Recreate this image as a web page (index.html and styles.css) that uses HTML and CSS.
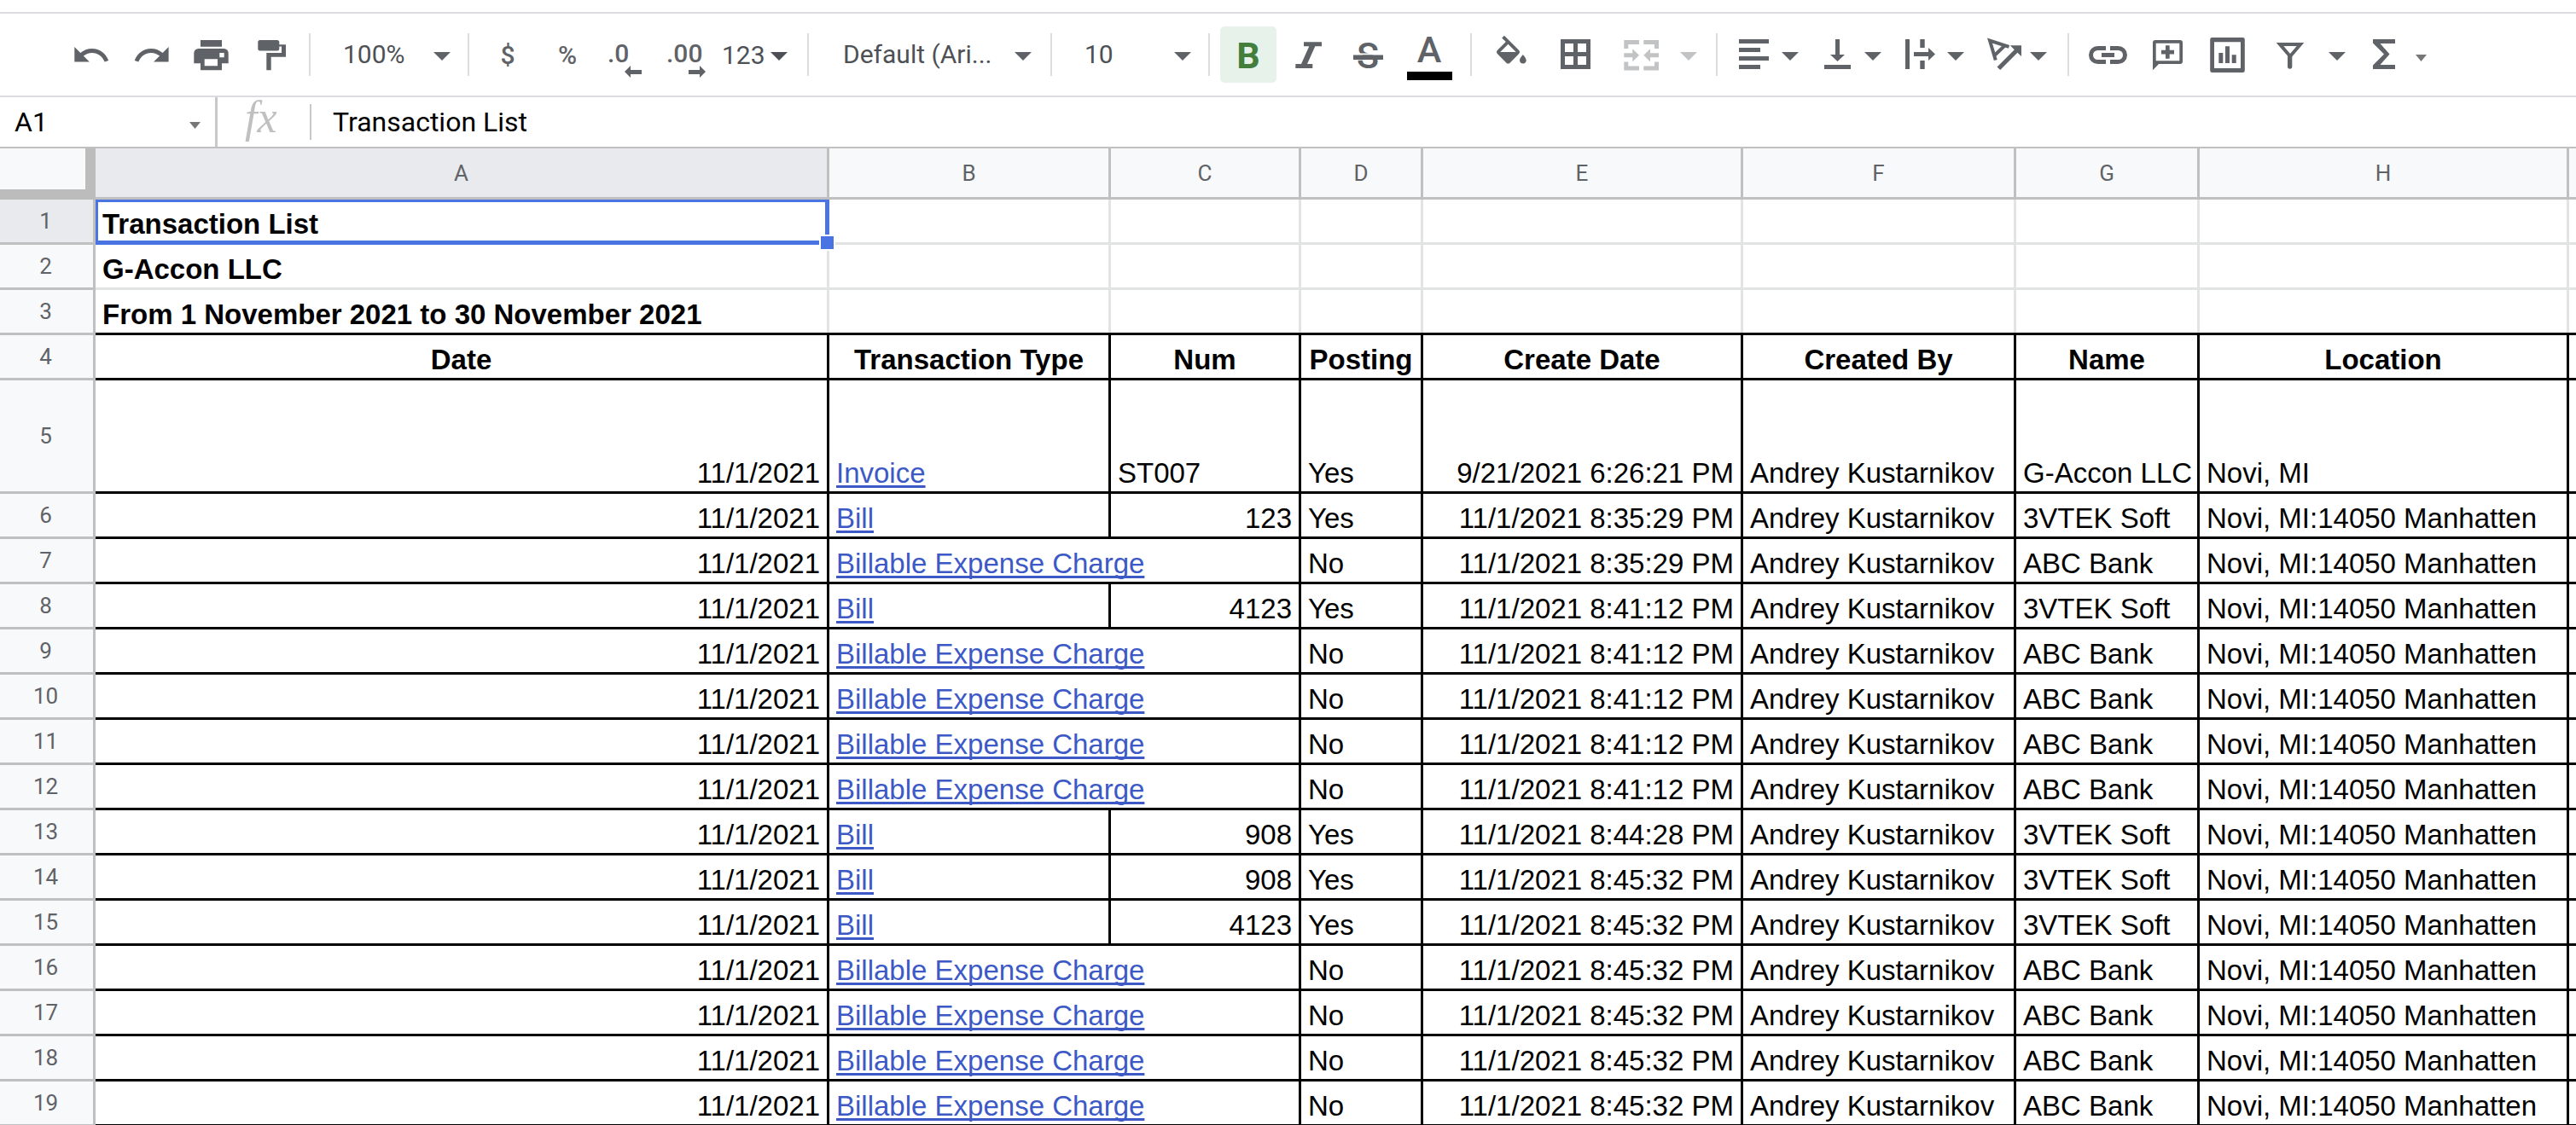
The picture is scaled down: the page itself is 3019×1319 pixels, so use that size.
FILE: index.html
```html
<!DOCTYPE html>
<html lang="en">
<head>
<meta charset="utf-8">
<title>Transaction List</title>
<link rel="stylesheet" href="styles.css">
</head>
<body>
<div class="app">
<header class="toolbar" role="toolbar" aria-label="Formatting">
  <div class="group">
    <button class="tool" aria-label="Undo"><svg class="icon" viewBox="0 0 44 44"><path transform="translate(-1.6 -.6) scale(1.95)" d="M12.5 8c-2.65 0-5.05.99-6.9 2.6L2 7v9h9l-3.62-3.62c1.39-1.16 3.16-1.88 5.12-1.88 3.54 0 6.55 2.31 7.6 5.5l2.37-.78C21.08 11.03 17.15 8 12.5 8z"/></svg></button>
    <button class="tool" aria-label="Redo"><svg class="icon" viewBox="0 0 44 44"><path transform="translate(-.3 -.6) scale(1.95)" d="M18.4 10.6C16.55 8.99 14.15 8 11.5 8c-4.65 0-8.58 3.03-9.96 7.22L3.9 16c1.05-3.19 4.05-5.5 7.6-5.5 1.95 0 3.73.72 5.12 1.88L13 16h9V7l-3.6 3.6z"/></svg></button>
    <button class="tool" aria-label="Print"><svg class="icon" viewBox="0 0 44 44"><path fill-rule="evenodd" d="M10 5h25v7.7H10zM7.5 15h30a5.2 5.2 0 0 1 5.2 5.2v12.1H35v8H10v-8H2.3V20.2A5.2 5.2 0 0 1 7.500 15zM14.700 27.300v8H30v-8zM32.300 20v5.300h5.400V20z"/></svg></button>
    <button class="tool" aria-label="Paint format"><svg class="icon" viewBox="0 0 44 44"><rect x="7.300" y="5" width="25" height="12.400" rx="2.500"/><path d="M32 10.300H40V24.700H22.700V40.300H17.300V20H35V12.500H32z"/></svg></button>
  </div>
  <span class="sep"></span>
  <div class="dropdown dropdown--zoom">
    <select aria-label="Zoom"><option>100%</option></select>
    <svg class="caret" viewBox="0 0 20 14"><path d="M0 4h20L10 14z"/></svg>
  </div>
  <span class="sep"></span>
  <div class="group">
    <button class="tool" aria-label="Format as currency">$</button>
    <button class="tool" aria-label="Format as percent">%</button>
    <button class="tool" aria-label="Decrease decimal places"><svg class="icon" viewBox="0 0 44 44"><text class="digits" x="-1" y="31">.0</text><path d="M19 42l7-7v5h13v5H26v4z"/></svg></button>
    <button class="tool" aria-label="Increase decimal places"><svg class="icon" viewBox="0 0 44 44"><text class="digits" x="-2" y="31">.00</text><path d="M44 42l-7-7v5H24v5h13v4z"/></svg></button>
    <button class="tool tool--number" aria-label="More formats">123<svg class="caret" viewBox="0 0 20 14"><path d="M0 4h20L10 14z"/></svg></button>
  </div>
  <span class="sep"></span>
  <div class="dropdown dropdown--font">
    <select aria-label="Font"><option>Default (Ari...</option></select>
    <svg class="caret" viewBox="0 0 20 14"><path d="M0 4h20L10 14z"/></svg>
  </div>
  <span class="sep"></span>
  <div class="dropdown dropdown--size">
    <select aria-label="Font size"><option>10</option></select>
    <svg class="caret" viewBox="0 0 20 14"><path d="M0 4h20L10 14z"/></svg>
  </div>
  <span class="sep"></span>
  <div class="group">
    <button class="tool tool--on" aria-label="Bold" aria-pressed="true"><svg class="icon" viewBox="0 0 44 44"><text class="letter letter--bold" x="22" y="38">B</text></svg></button>
    <button class="tool" aria-label="Italic"><svg class="icon" viewBox="0 0 44 44"><path d="M17 7.300H38v5H30.300L21 33h6.300v5H7.300v-5H14L23.300 12.300H17z"/></svg></button>
    <button class="tool" aria-label="Strikethrough"><svg class="icon" viewBox="0 0 44 44"><text class="letter" x="22" y="38">S</text><path class="knockout" d="M5 20.500h35v2H5z"/><path d="M5 22.500h35v5.500H5z"/></svg></button>
    <button class="tool tool--wide" aria-label="Text color"><svg class="icon" viewBox="0 0 44 44"><text class="letter" x="22" y="31">A</text><path class="swatch" d="M-4 42h53v10H-4z"/></svg></button>
  </div>
  <span class="sep"></span>
  <div class="group">
    <button class="tool tool--wide" aria-label="Fill color"><svg class="icon" viewBox="0 0 44 44"><path transform="translate(-1.8 -.3) scale(1.93)" d="M16.560 8.940L7.620 0 6.210 1.410l2.380 2.380-5.150 5.150c-.59.59-.59 1.540 0 2.120l5.500 5.500c.29.29.68.44 1.060.44s.77-.15 1.060-.44l5.500-5.500c.59-.58.59-1.530 0-2.120zM5.210 10L10 5.210 14.790 10H5.210zM19 11.500s-2 2.170-2 3.500c0 1.100.9 2 2 2s2-.9 2-2c0-1.330-2-3.500-2-3.500z"/></svg></button>
    <button class="tool tool--wide" aria-label="Borders"><svg class="icon" viewBox="0 0 44 44"><path fill-rule="evenodd" d="M4 4h35v35H4zM9 9v10h10V9zM24 9v10h10V9zM9 24v10h10V24zM24 24v10h10V24z"/></svg></button>
    <button class="tool tool--menu-wide" aria-label="Merge cells" disabled><svg class="icon" viewBox="0 0 44 44"><path d="M2.300 5H20v5H7.300v5h-5zM25.300 5H43v10h-5v-5H25.300zM2.300 30.500h5v5H20v5H2.300zM38 30.500h5v10H25.300v-5H38zM2.300 20.300h10v-5l7.700 7.500-7.700 7.500v-5h-10zM43 20.300H33v-5l-7.700 7.500 7.700 7.500v-5h10z"/></svg><svg class="caret" viewBox="0 0 20 14"><path d="M0 4h20L10 14z"/></svg></button>
  </div>
  <span class="sep"></span>
  <div class="group group--align">
    <button class="tool tool--menu" aria-label="Horizontal align"><svg class="icon" viewBox="0 0 44 44"><path d="M5 4h35v5H5zM5 14h25v5H5zM5 24h35v5H5zM5 34h25v5H5z"/></svg><svg class="caret" viewBox="0 0 20 14"><path d="M0 4h20L10 14z"/></svg></button>
    <button class="tool tool--menu" aria-label="Vertical align"><svg class="icon" viewBox="0 0 44 44"><path d="M8 34h31v5H8zM21 4h5v18h6l-8.500 8L15 22h6z"/></svg><svg class="caret" viewBox="0 0 20 14"><path d="M0 4h20L10 14z"/></svg></button>
    <button class="tool tool--menu" aria-label="Text wrapping"><svg class="icon" viewBox="0 0 44 44"><path d="M6 4h5v35H6zM23.300 4h5.400v10h-5.400zM23.300 29h5.400v10h-5.400zM16 19h17v-5l8 7.500-8 7.500v-5H16z"/></svg><svg class="caret" viewBox="0 0 20 14"><path d="M0 4h20L10 14z"/></svg></button>
    <button class="tool tool--menu" aria-label="Text rotation"><svg class="icon" viewBox="0 0 44 44"><path class="line line--4" d="M14.800 28.500L8 5.500l22.500 7.300M13.500 23L25 12"/><path d="M16.500 36.500l20.300-20.300-5-4.900H45V24l-4.600-4.300-20.200 20.300z"/></svg><svg class="caret" viewBox="0 0 20 14"><path d="M0 4h20L10 14z"/></svg></button>
  </div>
  <span class="sep"></span>
  <div class="group">
    <button class="tool" aria-label="Insert link"><svg class="icon" viewBox="0 0 44 44"><path class="line line--5" d="M20 14.500h-9.500a8 8 0 0 0 0 16H20M25 14.500h9.500a8 8 0 0 1 0 16H25"/><path d="M15 20h15v5H15z"/></svg></button>
    <button class="tool" aria-label="Insert comment"><svg class="icon" viewBox="0 0 44 44"><path fill-rule="evenodd" d="M8 5h29a3 3 0 0 1 3 3v22a3 3 0 0 1-3 3H12l-7 7.300V8a3 3 0 0 1 3-3zM8.700 8.700v20.600h27.600V8.700zM15 16.700h5v-5.400h4.700v5.400H30v4.800h-5.300v5.200H20v-5.200h-5z"/></svg></button>
    <button class="tool" aria-label="Insert chart"><svg class="icon" viewBox="0 0 44 44"><path fill-rule="evenodd" d="M4.500 2h36A2.300 2.300 0 0 1 42.800 4.300v36.400a2.300 2.300 0 0 1-2.300 2.300h-36A2.300 2.300 0 0 1 2.200 40.700V4.300A2.300 2.300 0 0 1 4.500 2zM7 7.200V38h31V7.200zM12.300 20h5v12h-5zM20 12.300h5V32h-5zM27.700 22.300h5V32h-5z"/></svg></button>
    <button class="tool tool--menu-wide" aria-label="Filter"><svg class="icon" viewBox="0 0 44 44"><path class="line line--4" d="M11 10h24L23 24z"/><path d="M20 23h5.300v13a2.600 2.600 0 0 1-5.300 0z"/></svg><svg class="caret" viewBox="0 0 20 14"><path d="M0 4h20L10 14z"/></svg></button>
    <button class="tool tool--sum" aria-label="Functions"><svg class="icon" viewBox="0 0 44 44"><path d="M9 4h26v5H17.500l11 12.500L17.500 34H35v5H9v-4.500l13-13L9 8.500z"/></svg><svg class="caret caret--small" viewBox="0 0 13 16"><path d="M0 8h13L6.500 16z"/></svg></button>
  </div>
</header>

<div class="formula-bar">
  <div class="name-box">
    <input class="name-input" type="text" aria-label="Name box" value="A1">
    <button class="name-menu" aria-label="Named ranges"><svg class="caret caret--small" viewBox="0 0 13 16"><path d="M0 8h13L6.500 16z"/></svg></button>
  </div>
  <label class="fx" for="formula">fx</label>
  <input class="formula-input" id="formula" type="text" value="Transaction List">
</div>

<main class="sheet">
<table class="grid">
  <colgroup>
    <col class="col-head"><col class="col-a"><col class="col-b"><col class="col-c"><col class="col-d"><col class="col-e"><col class="col-f"><col class="col-g"><col class="col-h"><col>
  </colgroup>
  <thead>
    <tr><td class="corner"></td><th class="active">A</th><th>B</th><th>C</th><th>D</th><th>E</th><th>F</th><th>G</th><th>H</th><th></th></tr>
  </thead>
  <tbody class="intro">
    <tr><th class="active">1</th><td class="selected">Transaction List<span class="selection"></span><span class="handle"></span></td><td></td><td></td><td></td><td></td><td></td><td></td><td></td><td></td></tr>
    <tr><th>2</th><td>G-Accon LLC</td><td></td><td></td><td></td><td></td><td></td><td></td><td></td><td></td></tr>
    <tr class="last"><th>3</th><td>From 1 November 2021 to 30 November 2021</td><td></td><td></td><td></td><td></td><td></td><td></td><td></td><td></td></tr>
  </tbody>
  <tbody class="data">
    <tr class="titles"><th>4</th><td>Date</td><td>Transaction Type</td><td>Num</td><td>Posting</td><td>Create Date</td><td>Created By</td><td>Name</td><td>Location</td><td></td></tr>
    <tr class="tall"><th>5</th><td class="num">11/1/2021</td><td><a href="#">Invoice</a></td><td>ST007</td><td>Yes</td><td class="num">9/21/2021 6:26:21 PM</td><td>Andrey Kustarnikov</td><td>G-Accon LLC</td><td>Novi, MI</td><td></td></tr>
    <tr><th>6</th><td class="num">11/1/2021</td><td><a href="#">Bill</a></td><td class="num">123</td><td>Yes</td><td class="num">11/1/2021 8:35:29 PM</td><td>Andrey Kustarnikov</td><td>3VTEK Soft</td><td>Novi, MI:14050 Manhatten</td><td></td></tr>
    <tr><th>7</th><td class="num">11/1/2021</td><td colspan="2"><a href="#">Billable Expense Charge</a></td><td>No</td><td class="num">11/1/2021 8:35:29 PM</td><td>Andrey Kustarnikov</td><td>ABC Bank</td><td>Novi, MI:14050 Manhatten</td><td></td></tr>
    <tr><th>8</th><td class="num">11/1/2021</td><td><a href="#">Bill</a></td><td class="num">4123</td><td>Yes</td><td class="num">11/1/2021 8:41:12 PM</td><td>Andrey Kustarnikov</td><td>3VTEK Soft</td><td>Novi, MI:14050 Manhatten</td><td></td></tr>
    <tr><th>9</th><td class="num">11/1/2021</td><td colspan="2"><a href="#">Billable Expense Charge</a></td><td>No</td><td class="num">11/1/2021 8:41:12 PM</td><td>Andrey Kustarnikov</td><td>ABC Bank</td><td>Novi, MI:14050 Manhatten</td><td></td></tr>
    <tr><th>10</th><td class="num">11/1/2021</td><td colspan="2"><a href="#">Billable Expense Charge</a></td><td>No</td><td class="num">11/1/2021 8:41:12 PM</td><td>Andrey Kustarnikov</td><td>ABC Bank</td><td>Novi, MI:14050 Manhatten</td><td></td></tr>
    <tr><th>11</th><td class="num">11/1/2021</td><td colspan="2"><a href="#">Billable Expense Charge</a></td><td>No</td><td class="num">11/1/2021 8:41:12 PM</td><td>Andrey Kustarnikov</td><td>ABC Bank</td><td>Novi, MI:14050 Manhatten</td><td></td></tr>
    <tr><th>12</th><td class="num">11/1/2021</td><td colspan="2"><a href="#">Billable Expense Charge</a></td><td>No</td><td class="num">11/1/2021 8:41:12 PM</td><td>Andrey Kustarnikov</td><td>ABC Bank</td><td>Novi, MI:14050 Manhatten</td><td></td></tr>
    <tr><th>13</th><td class="num">11/1/2021</td><td><a href="#">Bill</a></td><td class="num">908</td><td>Yes</td><td class="num">11/1/2021 8:44:28 PM</td><td>Andrey Kustarnikov</td><td>3VTEK Soft</td><td>Novi, MI:14050 Manhatten</td><td></td></tr>
    <tr><th>14</th><td class="num">11/1/2021</td><td><a href="#">Bill</a></td><td class="num">908</td><td>Yes</td><td class="num">11/1/2021 8:45:32 PM</td><td>Andrey Kustarnikov</td><td>3VTEK Soft</td><td>Novi, MI:14050 Manhatten</td><td></td></tr>
    <tr><th>15</th><td class="num">11/1/2021</td><td><a href="#">Bill</a></td><td class="num">4123</td><td>Yes</td><td class="num">11/1/2021 8:45:32 PM</td><td>Andrey Kustarnikov</td><td>3VTEK Soft</td><td>Novi, MI:14050 Manhatten</td><td></td></tr>
    <tr><th>16</th><td class="num">11/1/2021</td><td colspan="2"><a href="#">Billable Expense Charge</a></td><td>No</td><td class="num">11/1/2021 8:45:32 PM</td><td>Andrey Kustarnikov</td><td>ABC Bank</td><td>Novi, MI:14050 Manhatten</td><td></td></tr>
    <tr><th>17</th><td class="num">11/1/2021</td><td colspan="2"><a href="#">Billable Expense Charge</a></td><td>No</td><td class="num">11/1/2021 8:45:32 PM</td><td>Andrey Kustarnikov</td><td>ABC Bank</td><td>Novi, MI:14050 Manhatten</td><td></td></tr>
    <tr><th>18</th><td class="num">11/1/2021</td><td colspan="2"><a href="#">Billable Expense Charge</a></td><td>No</td><td class="num">11/1/2021 8:45:32 PM</td><td>Andrey Kustarnikov</td><td>ABC Bank</td><td>Novi, MI:14050 Manhatten</td><td></td></tr>
    <tr><th>19</th><td class="num">11/1/2021</td><td colspan="2"><a href="#">Billable Expense Charge</a></td><td>No</td><td class="num">11/1/2021 8:45:32 PM</td><td>Andrey Kustarnikov</td><td>ABC Bank</td><td>Novi, MI:14050 Manhatten</td><td></td></tr>
  </tbody>
</table>
</main>
</div>
</body>
</html>
```
FILE: styles.css
```css
* { box-sizing: border-box; }

body {
  margin: 0;
  background: #fff;
  color: #000;
  font-family: Roboto, "Liberation Sans", sans-serif;
}

button, input, select {
  margin: 0;
  padding: 0;
  border: 0;
  border-radius: 0;
  background: none;
  font: inherit;
  color: inherit;
  outline: none;
  appearance: none;
}

.app {
  display: flex;
  flex-direction: column;
  height: 100vh;
  padding-top: 14px;
  overflow: hidden;
}

/* Toolbar */
.toolbar {
  display: flex;
  align-items: center;
  flex: none;
  height: 100px;
  padding-left: 72px;
  border-top: 2px solid #dadce0;
  border-bottom: 2px solid #dadce0;
  color: #5f6368;
  font-size: 30px;
}

.group { display: flex; flex: none; }
.group--align { padding-right: 2px; }

.sep {
  flex: none;
  width: 2px;
  height: 50px;
  margin: 0 10px;
  background: #dadce0;
}

.tool {
  display: flex;
  align-items: center;
  justify-content: center;
  flex: none;
  width: 66px;
  height: 66px;
  margin: 0 2px;
  border-radius: 5px;
  font-weight: 500;
}
.tool--on { background: #e6f2ea; color: #437e3d; }
.tool--wide { justify-content: flex-start; width: 71px; padding-left: 13px; }
.tool--number {
  justify-content: flex-start;
  gap: 6px;
  width: 92px;
  padding-left: 4px;
  color: #4d5156;
  font-weight: 400;
}
.tool--menu { justify-content: flex-start; gap: 11px; width: 93px; padding-left: 8px; }
.tool--menu-wide { justify-content: flex-start; gap: 24px; width: 112px; padding-left: 14px; }
.tool--sum { justify-content: flex-start; gap: 15px; width: 93px; padding-left: 9px; }
.tool:disabled { color: #c1c3c5; }

.icon {
  flex: none;
  width: 44px;
  height: 44px;
  overflow: visible;
  fill: currentColor;
}
.line { fill: none; stroke: currentColor; }
.line--4 { stroke-width: 4px; }
.line--5 { stroke-width: 5px; }
.knockout { fill: #fff; }
.swatch { fill: #000; }
.digits { font-size: 30px; font-weight: 500; }
.letter { font-size: 43px; font-weight: 500; text-anchor: middle; }
.letter--bold { font-weight: 700; }

.caret { flex: none; width: 20px; height: 14px; fill: currentColor; }
.caret--small { width: 13px; height: 16px; fill: #777; }

.dropdown { position: relative; flex: none; height: 66px; color: #4d5156; }
.dropdown select { width: 100%; height: 100%; padding-bottom: 2px; }
.dropdown .caret {
  position: absolute;
  top: 26px;
  right: 10px;
  fill: #5f6368;
  pointer-events: none;
}
.dropdown--zoom { width: 164px; }
.dropdown--zoom select { padding-left: 28px; }
.dropdown--font { width: 263px; }
.dropdown--font select { padding-left: 30px; }
.dropdown--font .caret { right: 12px; }
.dropdown--size { width: 163px; }
.dropdown--size select { padding-left: 28px; }

/* Formula bar */
.formula-bar {
  display: flex;
  align-items: center;
  flex: none;
  height: 60px;
  border-bottom: 2px solid #c0c0c0;
  font-size: 32px;
}
.name-box {
  display: flex;
  align-items: center;
  align-self: stretch;
  flex: none;
  width: 255px;
  padding-left: 17px;
  border-right: 3px solid #c8c8c8;
}
.name-input { flex: 1; min-width: 0; }
.name-menu { display: flex; padding-right: 17px; }
.fx {
  flex: none;
  width: 110px;
  height: 42px;
  padding-left: 32px;
  border-right: 2px solid #c8c8c8;
  color: #c0c0c0;
  font: italic 52px/32px "Liberation Serif", serif;
}
.formula-input { flex: 1; min-width: 0; height: 100%; padding-left: 25px; }

/* Grid */
.sheet { flex: 1; min-height: 0; overflow: hidden; }

.grid {
  width: 100%;
  table-layout: fixed;
  border-collapse: separate;
  border-spacing: 0;
}
.col-head { width: 112px; }
.col-a { width: 860px; }
.col-b { width: 330px; }
.col-c { width: 223px; }
.col-d { width: 143px; }
.col-e { width: 375px; }
.col-f { width: 320px; }
.col-g { width: 215px; }
.col-h { width: 433px; }

.grid th {
  height: 53px;
  padding: 0;
  border: solid #c0c0c0;
  border-width: 0 3px 3px 0;
  background: #f8f9fa;
  color: #5f6368;
  font-size: 26px;
  font-weight: 400;
  line-height: 30px;
  text-align: center;
}
.grid thead th { height: 60px; }
.grid tbody th { padding-right: 2px; }
.grid th.active { background: #e8eaed; }

.corner {
  padding: 0;
  border: solid #bcbcbc;
  border-width: 0 12px 12px 0;
  background: #f8f9fa;
}

.grid tbody td {
  height: 53px;
  padding: 0 8px 2px;
  border: solid #000;
  border-width: 0 3px 3px 0;
  font-family: "Liberation Sans", Arial, sans-serif;
  font-size: 33px;
  line-height: 38px;
  white-space: nowrap;
  vertical-align: bottom;
}
.grid tbody .tall td { height: 133px; }
.grid tbody td:last-child, .grid th:last-child:not(:first-child) {
  padding: 0;
  border-right: 0;
}

.grid .intro td { border-color: #e2e3e3; font-weight: 700; }
.grid .titles td { font-weight: 700; text-align: center; }
.grid .num { text-align: right; }

/* Solid rule above the titles, drawn across the light column lines */
.grid .last td { position: relative; }
.grid .last td::after {
  content: "";
  position: absolute;
  right: -3px;
  bottom: -3px;
  left: 0;
  height: 3px;
  background: #000;
}

.grid a {
  color: #3c59c6;
  text-decoration: underline;
  text-decoration-thickness: 3px;
  text-decoration-skip-ink: none;
  text-underline-offset: 3px;
}

/* Active cell outline and fill handle */
.selected { position: relative; }
.selection {
  position: absolute;
  inset: 0 -3px -3px 0;
  border: solid #4a74e2;
  border-width: 3px 5px 5px 3px;
}
.handle {
  position: absolute;
  right: -10px;
  bottom: -10px;
  width: 19px;
  height: 19px;
  border: 2px solid #fff;
  background: #4a74e2;
}
```
